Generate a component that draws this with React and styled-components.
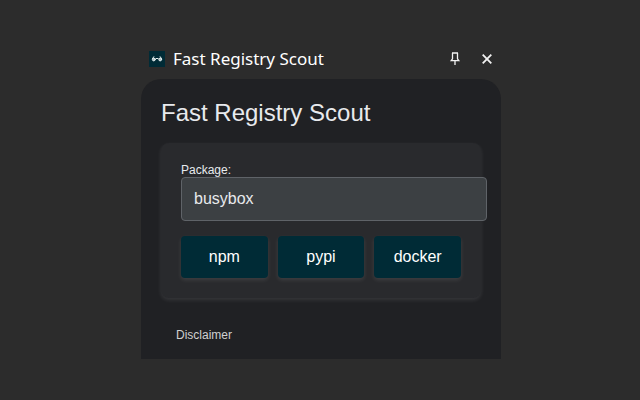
import React from "react";
import styled, { createGlobalStyle } from "styled-components";

const GlobalStyle = createGlobalStyle`
  html, body { margin: 0; background: #2c2c2c; }
  * { box-sizing: border-box; }
  body { overflow: hidden; font-family: "Liberation Sans", Arial, sans-serif; color: #e8eaed; }
`;

const Page = styled.main`
  width: 640px;
  height: 400px;
  padding: 39px 139px 0 141px;
  background: #2c2c2c;
`;

const TitleBar = styled.header`
  display: flex;
  align-items: center;
  height: 40px;
  padding: 0 6px 0 8px;
`;

const Logo = styled.svg`
  flex: none;
  width: 16px;
  height: 16px;
  margin-right: 8px;
`;

const WindowTitle = styled.span`
  flex: 1;
  font: 17px/24px "Noto Sans", "Open Sans", sans-serif;
  letter-spacing: 0;
  white-space: nowrap;
  color: #fff;
`;

const IconButton = styled.button`
  display: flex;
  width: 16px;
  height: 16px;
  margin-left: 16px;
  padding: 0;
  border: 0;
  background: none;
  color: #f2f2f2;
`;

const Popup = styled.section`
  height: 280px;
  padding: 20px;
  border-radius: 20px 20px 0 0;
  background: #202124;
`;

const Heading = styled.h1`
  margin: 0 0 16px;
  font-size: 24px;
  font-weight: 400;
  line-height: 28px;
`;

const Card = styled.form`
  height: 155px;
  padding: 20px;
  border-radius: 8px;
  background: #292a2d;
  box-shadow: 0 2px 4px rgba(255, 255, 255, 0.1);
`;

const Label = styled.label`
  display: block;
  height: 14px;
  font-size: 12px;
  line-height: 14px;
`;

const Input = styled.input`
  display: block;
  box-sizing: content-box;
  width: 100%;
  height: 18px;
  margin: 0 0 15px;
  padding: 12px;
  border: 1px solid #5f6368;
  border-radius: 4px;
  outline: 0;
  background: #3c4043;
  color: #e8eaed;
  font: 16px/18px "Liberation Sans", Arial, sans-serif;
`;

const ButtonRow = styled.div`
  display: grid;
  grid-template-columns: repeat(3, 1fr);
  gap: 10px;
`;

const RegistryButton = styled.button`
  height: 42px;
  padding: 0;
  border: 0;
  border-radius: 4px;
  background: #002b36;
  box-shadow: 0 2px 4px rgba(255, 255, 255, 0.1);
  color: #fff;
  font: 16px/18px "Liberation Sans", Arial, sans-serif;
`;

const Disclaimer = styled.p`
  margin: 30px 0 0 15px;
  color: #d0d0d0;
  font-size: 12px;
  line-height: 14px;
`;

const registries = ["npm", "pypi", "docker"];

export default function App() {
  return (
    <>
      <GlobalStyle />
      <Page>
        <TitleBar>
          <Logo viewBox="0 0 16 16">
            <rect width="16" height="16" fill="#002b36" />
            <g fill="none" stroke="#e4eeee" strokeWidth="1" strokeLinecap="round">
              <path d="M4.8 5.7 3.4 7.8M11.2 5.7l1.4 2.1M7 7.5h2" />
              <circle cx="4.8" cy="8.5" r="1.4" fill="#a9bfc2" />
              <circle cx="11.2" cy="8.5" r="1.4" fill="#a9bfc2" />
            </g>
          </Logo>
          <WindowTitle>Fast Registry Scout</WindowTitle>
          <IconButton aria-label="Pin">
            <svg width="16" height="16" viewBox="0 0 16 16" fill="none" stroke="currentColor" strokeWidth="1.3">
              <path d="M5 2h6M5.5 2v5.8L4.2 9.6h7.6l-1.3-1.8V2M8 9.6v4.4" />
            </svg>
          </IconButton>
          <IconButton aria-label="Close">
            <svg width="16" height="16" viewBox="0 0 16 16" fill="none" stroke="currentColor" strokeWidth="1.8">
              <path d="m3.7 3.7 8.6 8.6m0-8.6-8.6 8.6" />
            </svg>
          </IconButton>
        </TitleBar>
        <Popup>
          <Heading>Fast Registry Scout</Heading>
          <Card>
            <Label htmlFor="package">Package:</Label>
            <Input id="package" defaultValue="busybox" />
            <ButtonRow>
              {registries.map((name) => (
                <RegistryButton key={name} type="button">{name}</RegistryButton>
              ))}
            </ButtonRow>
          </Card>
          <Disclaimer>Disclaimer</Disclaimer>
        </Popup>
      </Page>
    </>
  );
}
